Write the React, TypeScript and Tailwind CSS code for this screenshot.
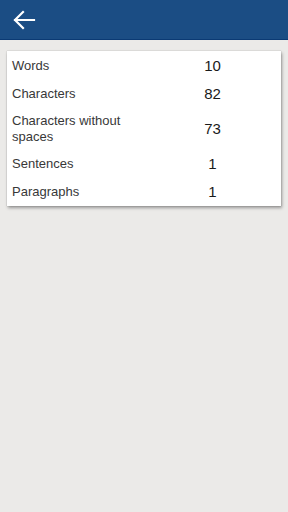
import React from "react";

const rows: { label: string; value: string; tall?: boolean }[] = [
  { label: "Words", value: "10" },
  { label: "Characters", value: "82" },
  { label: "Characters without spaces", value: "73", tall: true },
  { label: "Sentences", value: "1" },
  { label: "Paragraphs", value: "1" },
];

export default function App() {
  return (
    <div
      className="w-[288px] h-[512px] bg-[#ebeae8] flex flex-col"
      style={{ fontFamily: "'Liberation Sans', Arial, sans-serif" }}
    >
      <div className="h-[40px] bg-[#1b4d84] border-b border-[#0b3a74] flex items-center pl-[12px]">
        <svg width="24" height="24" viewBox="0 0 24 24" fill="none">
          <path
            d="M22 12H3M11 4L3 12L11 20"
            stroke="white"
            strokeWidth="2.2"
            strokeLinecap="square"
          />
        </svg>
      </div>
      <div className="mx-[7px] mt-[11px] bg-white shadow-[1px_2px_3px_rgba(0,0,0,0.35),0_0_1px_rgba(0,0,0,0.3)]">
        <div className="h-[1px]" />
        {rows.map((r) => (
          <div
            key={r.label}
            className={`grid grid-cols-2 items-center ${r.tall ? "h-[42px]" : "h-[28px]"}`}
          >
            <div className="pl-[5px] pr-[8px] text-[13px] leading-[16px] text-[#383838]">
              {r.label}
            </div>
            <div className="text-center text-[15px] text-[#1a1a1a]">{r.value}</div>
          </div>
        ))}
      </div>
    </div>
  );
}
